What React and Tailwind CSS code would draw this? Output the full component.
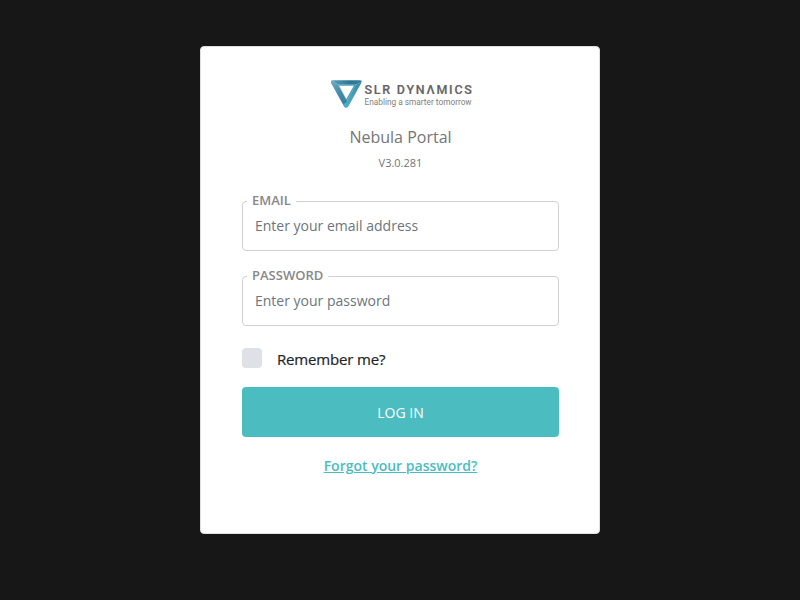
function Logo() {
  return (
    <svg width="150" height="34" viewBox="0 0 150 34" role="img" aria-label="SLR Dynamics">
      <defs>
        <linearGradient id="left" x1="0" y1="0" x2="0.7" y2="1">
          <stop offset="0" stopColor="#73acc3" />
          <stop offset="0.5" stopColor="#478da9" />
          <stop offset="1" stopColor="#397d9d" />
        </linearGradient>
        <linearGradient id="top" x1="0" y1="0" x2="1" y2="0">
          <stop offset="0" stopColor="#58a0b8" />
          <stop offset="0.6" stopColor="#2d7695" />
          <stop offset="1" stopColor="#31809f" />
        </linearGradient>
        <linearGradient id="right" x1="1" y1="0" x2="0" y2="1">
          <stop offset="0" stopColor="#348aa8" />
          <stop offset="1" stopColor="#50b3c5" />
        </linearGradient>
      </defs>
      <path d="M5.6 4.3 L12 8.8 L21.8 25.5 L19.2 31.4 Q18.6 31.3 18 30.3 L5 7 Q4.6 5 5.6 4.3 Z" fill="url(#left)" />
      <path d="M5.6 4.3 H34.2 Q36 4.4 35.7 5.8 L29.8 8.8 H12 Z" fill="url(#top)" />
      <path d="M29.8 8.8 L35.7 5.6 Q35.6 6.4 35 7.4 L22.3 30.4 Q20.8 32.5 19 31.4 L17.2 28.2 L20.4 26 Z" fill="url(#right)" />
      <path d="M12 8.7 H30 L20.4 25.8 Z" fill="#4594af" />
      <path d="M12.6 9.4 H28.2 L20.3 23.6 Z" fill="#b5dae3" />
      <path d="M13.6 10 H27.2 L20.3 22.4 Z" fill="#fff" />
      <g transform="translate(38.4 18) scale(0.96 1)">
        <text textLength="112" lengthAdjust="spacing" fill="#646464" stroke="#646464" strokeWidth="0.2" className="font-['Roboto',sans-serif] text-[13px] font-medium">SLR DYNΛMICS</text>
      </g>
      <text x="38.6" y="28.5" textLength="107" lengthAdjust="spacingAndGlyphs" fill="#7e7e7e" className="font-['Roboto',sans-serif] text-[8.6px] font-normal">Enabling a smarter tomorrow</text>
    </svg>
  );
}

function Field({ label, type, placeholder }) {
  return (
    <label className="relative block h-[50px] w-full">
      <span className="absolute -top-[11px] left-[5px] bg-white px-[5px] text-[13px] leading-5 font-semibold text-[#888]">
        {label}
      </span>
      <input
        type={type}
        placeholder={placeholder}
        className="block h-full w-full rounded border border-[#ced0d2] bg-white px-3 pb-[2px] text-sm text-[#6c757d] outline-none placeholder:text-[#6c757d]"
      />
    </label>
  );
}

export default function App() {
  return (
    <main className="flex h-screen w-full justify-center bg-[#171717] pt-[46px] font-['Open_Sans',sans-serif]">
      <form className="flex h-[488px] w-[400px] flex-col items-center rounded border border-[#dfdfdf] bg-white pr-10 pl-[41px] pt-[29px]">
        <Logo />
        <h1 className="mt-[15px] text-base leading-6 text-[#757575]">Nebula Portal</h1>
        <p className="mt-[6px] text-[11px] leading-4 text-[#757575]">V3.0.281</p>
        <div className="mt-[30px] flex w-full flex-col gap-[25px]">
          <Field label="EMAIL" type="text" placeholder="Enter your email address" />
          <Field label="PASSWORD" type="password" placeholder="Enter your password" />
        </div>
        <label className="mt-[22px] flex h-[22px] w-full gap-[15px]">
          <span className="size-5 rounded bg-[#dee2e6]" />
          <span className="text-[15px] leading-[23px] font-medium tracking-[-0.17px] text-[#212529] [-webkit-text-stroke:0.2px_#212529]">Remember me?</span>
        </label>
        <button type="button" className="mt-[17px] h-[50px] w-full shrink-0 rounded bg-[#4bbdc1] pt-[2px] text-sm text-white">
          LOG IN
        </button>
        <a href="#" className="mt-[19px] text-sm leading-5 font-semibold text-[#4bbdc1] underline">
          Forgot your password?
        </a>
      </form>
    </main>
  );
}
